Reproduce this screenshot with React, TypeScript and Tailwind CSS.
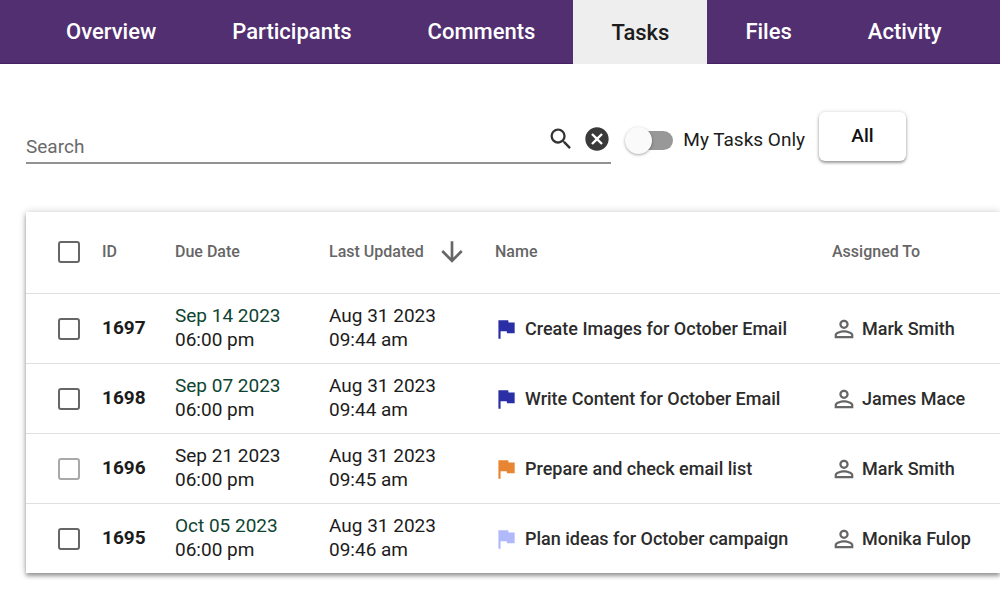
import { useState } from "react";
import { MdArrowDownward, MdCancel, MdFlag, MdPersonOutline, MdSearch } from "react-icons/md";

type Task = {
  id: string;
  dueDate: string;
  dueTime: string;
  dueColor: string;
  updatedDate: string;
  updatedTime: string;
  name: string;
  flagColor: string;
  assignee: string;
  boxColor: string;
};

const tabs = ["Overview", "Participants", "Comments", "Tasks", "Files", "Activity"];

const tasks: Task[] = [
  {
    id: "1697",
    dueDate: "Sep 14 2023",
    dueTime: "06:00 pm",
    dueColor: "text-[#0f4432]",
    updatedDate: "Aug 31 2023",
    updatedTime: "09:44 am",
    name: "Create Images for October Email",
    flagColor: "text-[#2a2fa5]",
    assignee: "Mark Smith",
    boxColor: "border-[#666666]",
  },
  {
    id: "1698",
    dueDate: "Sep 07 2023",
    dueTime: "06:00 pm",
    dueColor: "text-[#0f4432]",
    updatedDate: "Aug 31 2023",
    updatedTime: "09:44 am",
    name: "Write Content for October Email",
    flagColor: "text-[#2a2fa5]",
    assignee: "James Mace",
    boxColor: "border-[#666666]",
  },
  {
    id: "1696",
    dueDate: "Sep 21 2023",
    dueTime: "06:00 pm",
    dueColor: "text-[#1c1c1c]",
    updatedDate: "Aug 31 2023",
    updatedTime: "09:45 am",
    name: "Prepare and check email list",
    flagColor: "text-[#e78532]",
    assignee: "Mark Smith",
    boxColor: "border-[#a9a9a9]",
  },
  {
    id: "1695",
    dueDate: "Oct 05 2023",
    dueTime: "06:00 pm",
    dueColor: "text-[#0f4432]",
    updatedDate: "Aug 31 2023",
    updatedTime: "09:46 am",
    name: "Plan ideas for October campaign",
    flagColor: "text-[#b0bafb]",
    assignee: "Monika Fulop",
    boxColor: "border-[#666666]",
  },
];

function Checkbox({ label, color }: { label: string; color: string }) {
  return (
    <input
      type="checkbox"
      aria-label={label}
      className={`block size-[22px] appearance-none rounded-[3px] border-2 bg-white checked:bg-[#522f70] ${color}`}
    />
  );
}

function TaskRow({ task }: { task: Task }) {
  return (
    <tr className="h-[70px] border-t border-[#dfdfdf] leading-6">
      <td className="pt-0.5 pl-8">
        <Checkbox label={`Select task ${task.id}`} color={task.boxColor} />
      </td>
      <td className="font-bold">{task.id}</td>
      <td>
        <div className={task.dueColor}>{task.dueDate}</div>
        <div>{task.dueTime}</div>
      </td>
      <td>
        <div>{task.updatedDate}</div>
        <div>{task.updatedTime}</div>
      </td>
      <td className="pt-0.5 text-lg font-medium text-[#2c2c2c]">
        <div className="-ml-0.5 flex items-center gap-1.5">
          <MdFlag className={`size-[26px] shrink-0 ${task.flagColor}`} />
          {task.name}
        </div>
      </td>
      <td className="pt-0.5 text-lg font-medium text-[#2c2c2c]">
        <div className="-ml-0.5 flex items-center gap-1">
          <MdPersonOutline className="size-7 shrink-0 text-[#666666]" />
          {task.assignee}
        </div>
      </td>
    </tr>
  );
}

export default function App() {
  const [activeTab, setActiveTab] = useState("Tasks");
  const [search, setSearch] = useState("");

  return (
    <div className="overflow-x-hidden bg-white pb-7 font-[Roboto,sans-serif] text-[#1c1c1c]">
      <nav className="flex h-16 border-b border-[#46215f] bg-[#522f70] pl-7 text-[22px] font-medium">
        {tabs.map((tab) => (
          <button
            key={tab}
            type="button"
            onClick={() => setActiveTab(tab)}
            className={
              tab === activeTab
                ? "-mb-px bg-[#eeeeee] px-[38px] text-[#1c1c1c]"
                : "px-[38px] text-white"
            }
          >
            {tab}
          </button>
        ))}
      </nav>

      <main className="pt-12 pl-[26px]">
        <div className="flex items-center pr-[94px] text-[19px]">
          <div className="flex h-[52px] flex-1 items-center border-b-2 border-[#929292] pt-1">
            <input
              type="text"
              aria-label="Search"
              placeholder="Search"
              value={search}
              onChange={(e) => setSearch(e.target.value)}
              className="min-w-0 flex-1 pt-4 outline-none placeholder:text-[#6a6a6a]"
            />
            <button type="button" aria-label="Search tasks" className="text-[#333333]">
              <MdSearch className="size-7" />
            </button>
            <button
              type="button"
              aria-label="Clear search"
              onClick={() => setSearch("")}
              className="ml-2 text-[#3a3a3a]"
            >
              <MdCancel className="size-7" />
            </button>
          </div>

          <label className="mt-1 ml-3.5 flex items-center gap-2.5">
            <span className="relative flex h-7 w-12 items-center">
              <input
                type="checkbox"
                role="switch"
                className="peer ml-2 h-[19px] w-10 appearance-none rounded-full bg-[#989898] checked:bg-[#522f70]"
              />
              <span className="pointer-events-none absolute left-0 size-[27px] rounded-full bg-[#fafafa] shadow-[0_1px_3px_rgba(0,0,0,0.35)] peer-checked:left-5" />
            </span>
            My Tasks Only
          </label>

          <button
            type="button"
            className="ml-3.5 h-[49px] w-[87px] self-start rounded-md bg-white font-medium text-[#111111] shadow-[0_2px_3px_rgba(0,0,0,0.35),0_0_4px_rgba(0,0,0,0.15)]"
          >
            All
          </button>
        </div>

        <div className="mt-12 shadow-[0_3px_4px_rgba(0,0,0,0.35),0_0_8px_rgba(0,0,0,0.18)]">
          <table className="w-full table-fixed text-left text-[19px] whitespace-nowrap">
            <colgroup>
              <col className="w-[76px]" />
              <col className="w-[73px]" />
              <col className="w-[154px]" />
              <col className="w-[166px]" />
              <col className="w-[337px]" />
              <col />
            </colgroup>
            <thead>
              <tr className="h-[81px] text-base text-[#666666]">
                <th className="pl-8">
                  <Checkbox label="Select all tasks" color="border-[#666666]" />
                </th>
                <th className="font-medium">ID</th>
                <th className="font-medium">Due Date</th>
                <th className="font-medium" aria-sort="descending">
                  <button type="button" className="flex items-center gap-3">
                    Last Updated
                    <MdArrowDownward className="size-8" />
                  </button>
                </th>
                <th className="font-medium">Name</th>
                <th className="font-medium">Assigned To</th>
              </tr>
            </thead>
            <tbody>
              {tasks.map((task) => (
                <TaskRow key={task.id} task={task} />
              ))}
            </tbody>
          </table>
        </div>
      </main>
    </div>
  );
}
